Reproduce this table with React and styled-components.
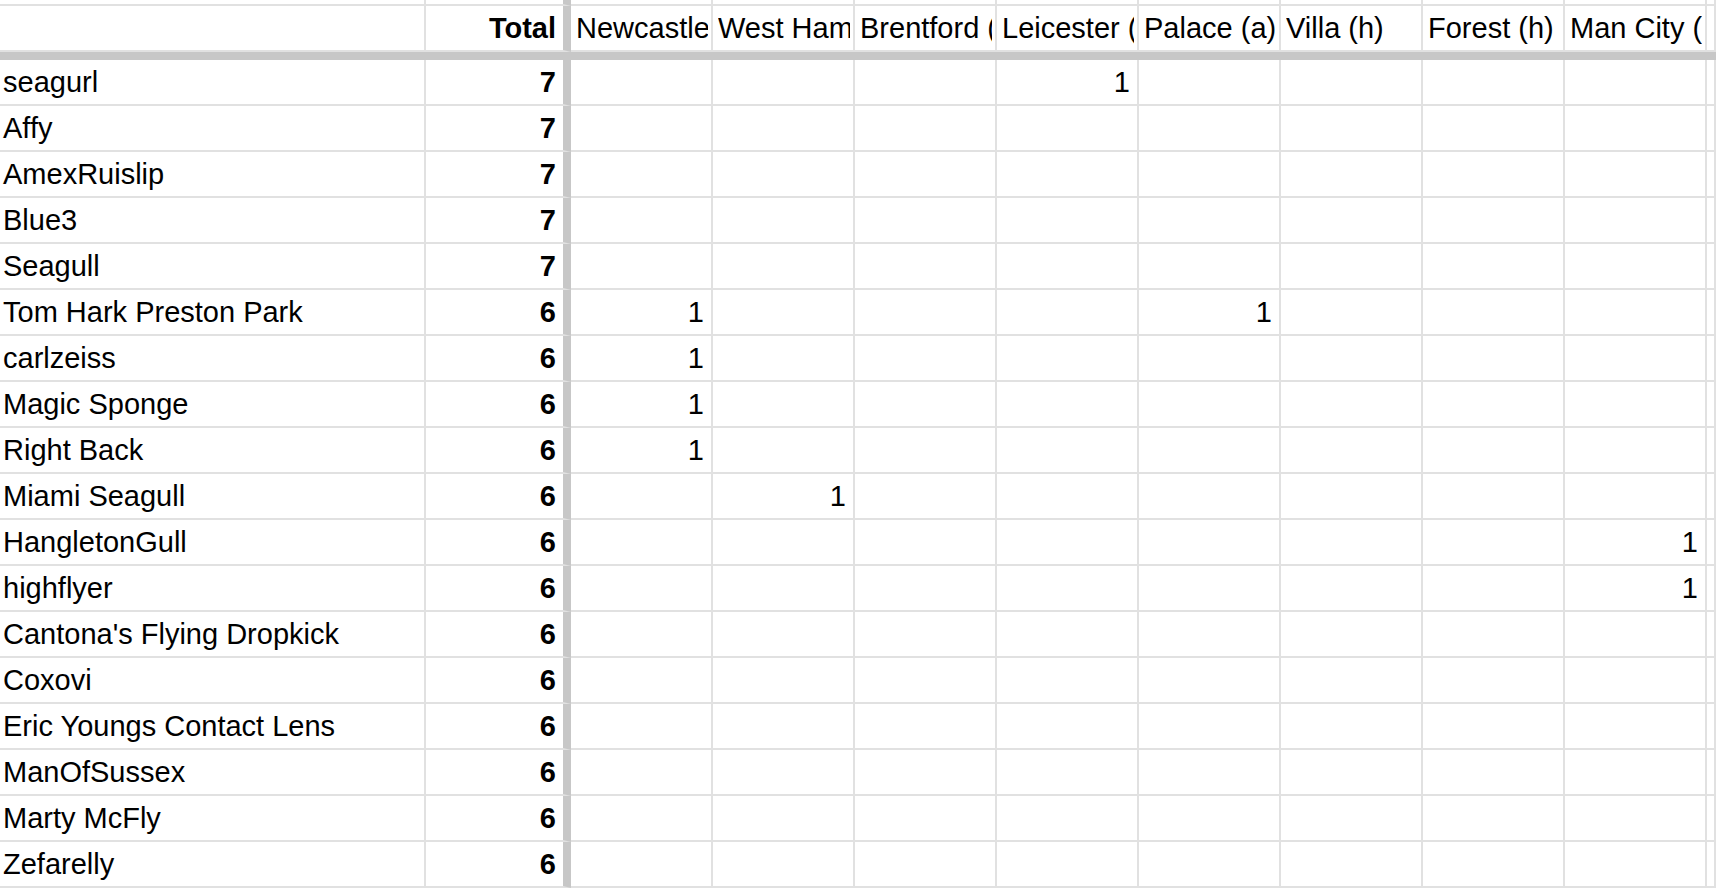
import React from 'react'
import styled, { createGlobalStyle } from 'styled-components'

const GlobalStyle = createGlobalStyle`
  html, body {
    margin: 0;
    padding: 0;
    background: #fff;
    overflow: hidden;
  }
  body {
    font-family: "Liberation Sans", Arial, Helvetica, sans-serif;
    color: #000;
  }
`

const COLS = '426px 145px repeat(8, 142px) 9px'

const Sheet = styled.div`
  width: 1716px;
  height: 888px;
  overflow: hidden;
`

const Row = styled.div`
  display: grid;
  grid-template-columns: ${COLS};
  height: ${p => p.$h || 46}px;
`

const Cell = styled.div`
  box-sizing: border-box;
  height: 100%;
  border-right: ${p => (p.$frozen ? '8px solid #c7c7c7' : '2px solid #e1e1e1')};
  border-bottom: 2px solid #e1e1e1;
  padding: ${p => (p.$right ? '0 7px 0 0' : `0 0 0 ${p.$pad ?? 5}px`)};
  text-align: ${p => (p.$right ? 'right' : 'left')};
  font-size: 29px;
  line-height: 45px;
  font-weight: ${p => (p.$bold ? 700 : 400)};
  white-space: nowrap;
  overflow: hidden;
`

// header labels are clipped a little before the grid line, like the sheet does
const Label = styled.span`
  display: block;
  overflow: hidden;
  margin-right: 3px;
`

const FreezeBar = styled.div`
  height: 8px;
  background: #c7c7c7;
`

const teams = [
  'Newcastle (h)',
  'West Ham (a)',
  'Brentford (h)',
  'Leicester (a)',
  'Palace (a)',
  'Villa (h)',
  'Forest (h)',
  'Man City (a)',
]

// points per fixture, keyed by column index in teams
const players = [
  { name: 'seagurl', total: 7, hits: { 3: 1 } },
  { name: 'Affy', total: 7 },
  { name: 'AmexRuislip', total: 7 },
  { name: 'Blue3', total: 7 },
  { name: 'Seagull', total: 7 },
  { name: 'Tom Hark Preston Park', total: 6, hits: { 0: 1, 4: 1 } },
  { name: 'carlzeiss', total: 6, hits: { 0: 1 } },
  { name: 'Magic Sponge', total: 6, hits: { 0: 1 } },
  { name: 'Right Back', total: 6, hits: { 0: 1 } },
  { name: 'Miami Seagull', total: 6, hits: { 1: 1 } },
  { name: 'HangletonGull', total: 6, hits: { 7: 1 } },
  { name: 'highflyer', total: 6, hits: { 7: 1 } },
  { name: "Cantona's Flying Dropkick", total: 6 },
  { name: 'Coxovi', total: 6 },
  { name: 'Eric Youngs Contact Lens', total: 6 },
  { name: 'ManOfSussex', total: 6 },
  { name: 'Marty McFly', total: 6 },
  { name: 'Zefarelly', total: 6 },
]

export default function App() {
  return (
    <>
      <GlobalStyle />
      <Sheet>
        <Row $h={6}>
          <Cell />
          <Cell $frozen />
          {teams.map(t => <Cell key={t} />)}
          <Cell />
        </Row>
        <Row $h={46}>
          <Cell />
          <Cell $frozen $right $bold>Total</Cell>
          {teams.map(t => (
            <Cell key={t}>
              <Label>{t}</Label>
            </Cell>
          ))}
          <Cell />
        </Row>
        <FreezeBar />
        {players.map(p => (
          <Row key={p.name}>
            <Cell $pad={3}>{p.name}</Cell>
            <Cell $frozen $right $bold>{p.total}</Cell>
            {teams.map((t, i) => (
              <Cell key={t} $right>{p.hits && p.hits[i]}</Cell>
            ))}
            <Cell />
          </Row>
        ))}
      </Sheet>
    </>
  )
}
